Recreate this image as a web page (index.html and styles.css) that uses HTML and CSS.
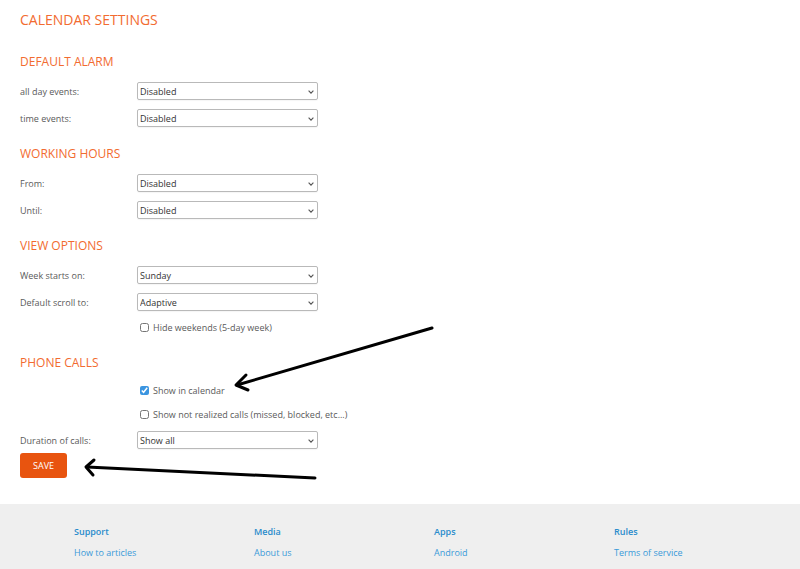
FILE: index.html
```html
<!DOCTYPE html>
<html lang="en">
<head>
  <meta charset="UTF-8">
  <title>Calendar settings</title>
  <link rel="stylesheet" href="styles.css">
</head>
<body>
  <main class="settings">
    <h1 class="page-title">CALENDAR SETTINGS</h1>

    <section class="group group-first">
      <h2 class="group-title">DEFAULT ALARM</h2>
      <div class="rows">
        <div class="row">
          <label class="row-label">all day events:</label>
          <div class="select"><select><option>Disabled</option></select><svg class="chevron" width="6" height="4" viewBox="0 0 6 4"><polyline points="0.6,0.6 3,3.2 5.4,0.6"/></svg></div>
        </div>
        <div class="row">
          <label class="row-label">time events:</label>
          <div class="select"><select><option>Disabled</option></select><svg class="chevron" width="6" height="4" viewBox="0 0 6 4"><polyline points="0.6,0.6 3,3.2 5.4,0.6"/></svg></div>
        </div>
      </div>
    </section>

    <section class="group">
      <h2 class="group-title">WORKING HOURS</h2>
      <div class="rows">
        <div class="row">
          <label class="row-label">From:</label>
          <div class="select"><select><option>Disabled</option></select><svg class="chevron" width="6" height="4" viewBox="0 0 6 4"><polyline points="0.6,0.6 3,3.2 5.4,0.6"/></svg></div>
        </div>
        <div class="row">
          <label class="row-label">Until:</label>
          <div class="select"><select><option>Disabled</option></select><svg class="chevron" width="6" height="4" viewBox="0 0 6 4"><polyline points="0.6,0.6 3,3.2 5.4,0.6"/></svg></div>
        </div>
      </div>
    </section>

    <section class="group">
      <h2 class="group-title">VIEW OPTIONS</h2>
      <div class="rows">
        <div class="row">
          <label class="row-label">Week starts on:</label>
          <div class="select"><select><option>Sunday</option></select><svg class="chevron" width="6" height="4" viewBox="0 0 6 4"><polyline points="0.6,0.6 3,3.2 5.4,0.6"/></svg></div>
        </div>
        <div class="row">
          <label class="row-label">Default scroll to:</label>
          <div class="select"><select><option>Adaptive</option></select><svg class="chevron" width="6" height="4" viewBox="0 0 6 4"><polyline points="0.6,0.6 3,3.2 5.4,0.6"/></svg></div>
        </div>
        <label class="row check-row"><input type="checkbox"> Hide weekends (5-day week)</label>
      </div>
    </section>

    <section class="group group-phone">
      <h2 class="group-title">PHONE CALLS</h2>
      <div class="rows rows-phone">
        <label class="row check-row"><input type="checkbox" checked> Show in calendar</label>
        <label class="row check-row"><input type="checkbox"> Show not realized calls (missed, blocked, etc...)</label>
        <div class="row">
          <label class="row-label">Duration of calls:</label>
          <div class="select"><select><option>Show all</option></select><svg class="chevron" width="6" height="4" viewBox="0 0 6 4"><polyline points="0.6,0.6 3,3.2 5.4,0.6"/></svg></div>
        </div>
      </div>
    </section>

    <button class="save-btn">SAVE</button>
  </main>

  <footer class="footer">
    <div class="footer-col">
      <div class="footer-head">Support</div>
      <a href="#">How to articles</a>
    </div>
    <div class="footer-col">
      <div class="footer-head">Media</div>
      <a href="#">About us</a>
    </div>
    <div class="footer-col">
      <div class="footer-head">Apps</div>
      <a href="#">Android</a>
    </div>
    <div class="footer-col">
      <div class="footer-head">Rules</div>
      <a href="#">Terms of service</a>
    </div>
  </footer>

  <!-- hand-drawn annotation arrows -->
  <svg class="arrows" width="800" height="569" viewBox="0 0 800 569">
    <line x1="432" y1="328" x2="237" y2="385"/>
    <polyline points="246,375 236,385 248,390"/>
    <line x1="315" y1="478" x2="87" y2="467"/>
    <polyline points="94,460 86,467 93,475"/>
  </svg>
</body>
</html>
```

FILE: styles.css
```css
body {
  margin: 0;
  padding: 0;
  background: #ffffff;
  font-family: 'Open Sans', 'Noto Sans', sans-serif;
  color: #555555;
  position: relative;
  overflow: hidden;
}

.settings {
  padding: 10px 20px 26px;
}

.page-title {
  margin: 0;
  font-size: 14px;
  line-height: 20px;
  font-weight: normal;
  color: #f26b30;
}

.group {
  margin-top: 19px;
}

.group-first {
  margin-top: 24px;
}

.group-phone {
  margin-top: 21px;
}

.group-title {
  margin: 0 0 12px;
  font-size: 12px;
  line-height: 16px;
  font-weight: normal;
  color: #f26b30;
}

.rows {
  display: flex;
  flex-direction: column;
  gap: 9px;
}

.rows-phone {
  gap: 10px;
}

.row {
  display: flex;
  align-items: center;
  height: 18px;
  font-size: 9px;
}

.row-label {
  width: 117px;
  color: #5a5a5a;
}

.select {
  position: relative;
  width: 181px;
  height: 18px;
}

.select select {
  appearance: none;
  -webkit-appearance: none;
  width: 100%;
  height: 18px;
  margin: 0;
  padding: 0 0 0 2px;
  border: 1px solid #b9b9b9;
  border-radius: 2px;
  background: #ffffff;
  font-family: 'Open Sans', 'Noto Sans', sans-serif;
  font-size: 9px;
  color: #333333;
  box-shadow: 0 1px 1px rgba(0, 0, 0, 0.04);
}

.chevron {
  position: absolute;
  right: 4px;
  top: 8px;
  fill: none;
  stroke: #555555;
  stroke-width: 1.1;
  pointer-events: none;
}

.check-row {
  height: 14px;
  padding-left: 120px;
  color: #5a5a5a;
}

.check-row input {
  width: 9px;
  height: 9px;
  margin: 0 4px 0 0;
  accent-color: #3b95e0;
}

.save-btn {
  display: block;
  margin-top: 4px;
  width: 47px;
  height: 25px;
  padding: 0;
  border: none;
  border-radius: 3px;
  background: #e8540f;
  color: #ffffff;
  font-family: 'Open Sans', 'Noto Sans', sans-serif;
  font-size: 9px;
  cursor: pointer;
}

.footer {
  display: flex;
  height: 65px;
  box-sizing: border-box;
  padding: 21px 0 0 74px;
  background: #efefef;
  font-size: 9px;
  line-height: 14px;
}

.footer-col {
  width: 180px;
  display: flex;
  flex-direction: column;
  gap: 7px;
}

.footer-head {
  color: #2a8ccc;
  font-weight: 600;
}

.footer-col a {
  color: #3a9ad9;
  text-decoration: none;
}

.arrows {
  position: absolute;
  top: 0;
  left: 0;
  pointer-events: none;
  fill: none;
  stroke: #000000;
  stroke-width: 3;
  stroke-linecap: round;
  stroke-linejoin: round;
}
```
